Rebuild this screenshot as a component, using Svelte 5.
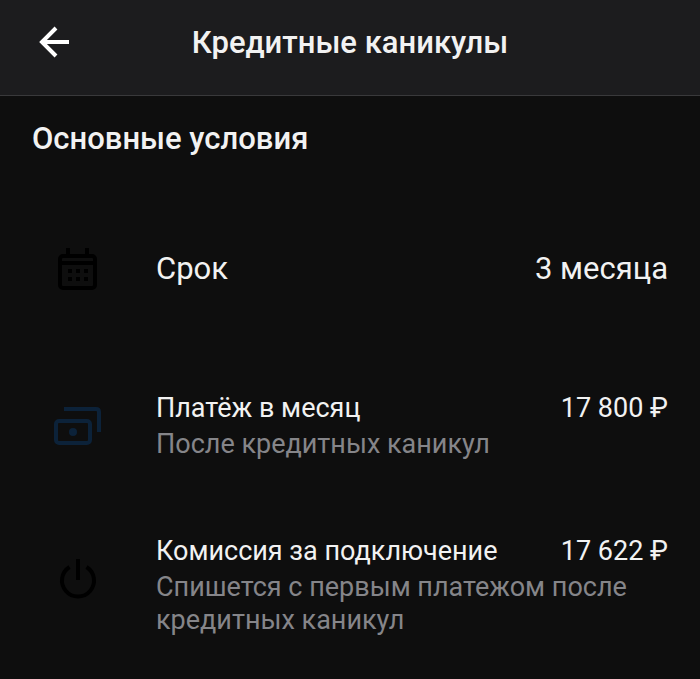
<script>
  const terms = [
    { icon: 'calendar', label: 'Срок', value: '3 месяца' },
    {
      icon: 'banknotes',
      label: 'Платёж в месяц',
      value: '17 800 ₽',
      note: 'После кредитных каникул',
    },
    {
      icon: 'power',
      label: 'Комиссия за подключение',
      value: '17 622 ₽',
      note: 'Спишется с первым платежом после кредитных каникул',
    },
  ]
</script>

<div class="screen">
  <header>
    <button class="back" aria-label="Назад">
      <svg viewBox="0 0 32 32" width="32" height="32" aria-hidden="true">
        <path d="M31 16H5M18 2 4 16l14 14" />
      </svg>
    </button>
    <h1>Кредитные каникулы</h1>
  </header>

  <main>
    <h2>Основные условия</h2>

    <ul>
      {#each terms as { icon, label, value, note }}
        <li class:single={!note}>
          <svg class="icon {icon}" viewBox="0 0 48 48" aria-hidden="true">
            {#if icon === 'calendar'}
              <rect x="6" y="11" width="35" height="32" rx="3" />
              <path d="M6 18h35M14 3v7M33 3v7" />
              <g class="solid">
                <rect x="14" y="24" width="4" height="4" />
                <rect x="22" y="24" width="4" height="4" />
                <rect x="30" y="24" width="4" height="4" />
                <rect x="14" y="32" width="4" height="4" />
                <rect x="22" y="32" width="4" height="4" />
                <rect x="30" y="32" width="4" height="4" />
              </g>
            {:else if icon === 'banknotes'}
              <path d="M10 7h32q3 0 3 3v20" />
              <rect x="2" y="19" width="34" height="22" rx="3" />
              <circle class="solid" cx="19" cy="30" r="4" />
            {:else}
              <path d="M15.500 12a16 16 0 1 0 17 0M24 4v21" />
            {/if}
          </svg>

          <div class="text">
            <div class="line">
              <span>{label}</span>
              <span class="value">{value}</span>
            </div>
            {#if note}
              <p>{note}</p>
            {/if}
          </div>
        </li>
      {/each}
    </ul>
  </main>
</div>

<style>
  :global(body) {
    background: #0e0e0e;
  }

  .screen {
    min-height: 100vh;
    background: #0e0e0e;
    color: #f2f2f2;
    font-family: Roboto, "Noto Sans", sans-serif;
  }

  header {
    display: grid;
    grid-template-columns: 48px 1fr 48px;
    align-items: center;
    padding: 18px 30px 29px;
    border-bottom: 1px solid #39393b;
    background: #1c1c1e;
  }

  .back {
    display: flex;
    align-items: center;
    width: 48px;
    height: 48px;
    padding: 0 0 0 8px;
    border: 0;
    background: none;
    color: #fff;
    cursor: pointer;
  }

  .back svg {
    flex: none;
    fill: none;
    stroke: currentColor;
    stroke-width: 4;
  }

  h1,
  h2 {
    margin: 0;
    font-size: 31px;
    font-weight: 500;
    line-height: 42px;
  }

  h1 {
    padding-top: 2px;
    text-align: center;
  }

  main {
    padding: 22px 32px 40px;
  }

  ul {
    margin: 0;
    padding: 0;
    list-style: none;
  }

  li {
    display: flex;
    gap: 54px;
    padding-top: 72px;
  }

  li.single {
    align-items: center;
    padding: 85px 0 25px;
  }

  .icon {
    flex: none;
    width: 48px;
    height: 48px;
    margin: 12px 0 0 22px;
    fill: none;
    stroke: currentColor;
    stroke-width: 4;
  }

  .single .icon {
    margin-top: 0;
  }

  .icon.power {
    margin-top: 22px;
  }

  .calendar,
  .power {
    color: #000;
  }

  .banknotes {
    color: #0c2239;
  }

  .solid {
    fill: currentColor;
    stroke: none;
  }

  .text {
    flex: 1;
    min-width: 0;
  }

  .line {
    display: flex;
    justify-content: space-between;
    gap: 16px;
    font-size: 27px;
    line-height: 36px;
  }

  .single .line {
    font-size: 31px;
  }

  .value {
    white-space: nowrap;
  }

  p {
    margin: 2px 0 0;
    color: #858589;
    font-size: 27px;
    line-height: 33px;
  }
</style>
